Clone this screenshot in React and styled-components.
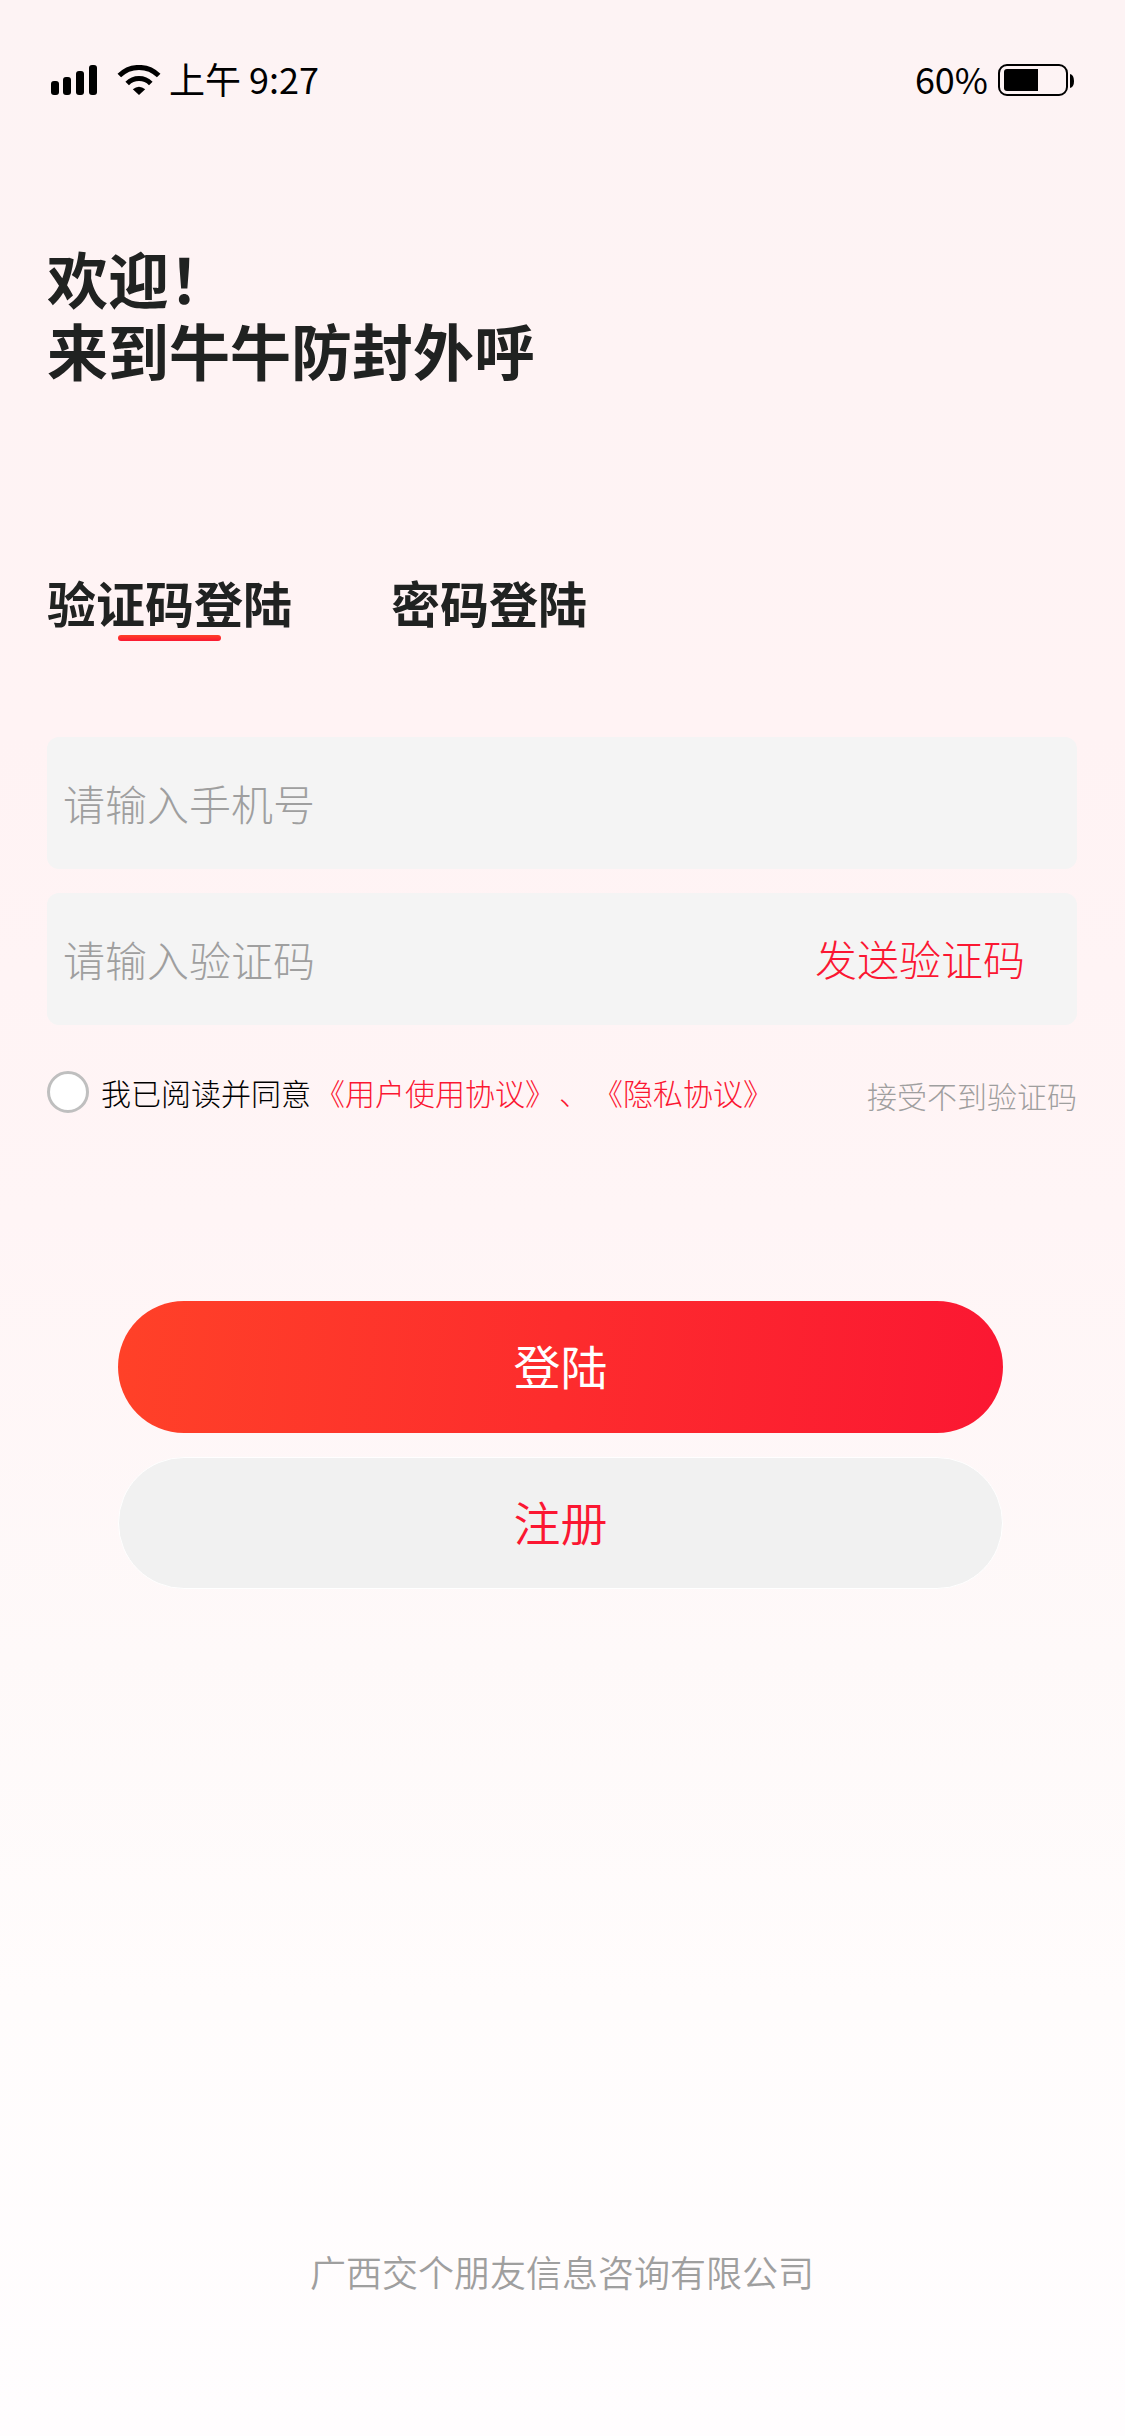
import styled, { createGlobalStyle } from "styled-components";
import { useState } from "react";

const GlobalStyle = createGlobalStyle`
  * {
    box-sizing: border-box;
  }

  body {
    margin: 0;
  }

  body,
  button,
  input {
    font-family: "Noto Sans CJK SC", sans-serif;
  }
`;

const Container = styled.div`
  min-height: 100vh;
  padding: 54px 48px 141px 47px;
  display: flex;
  flex-direction: column;
  background: linear-gradient(
    #fdf3f4 0%,
    #fff3f4 30%,
    #fff5f6 50%,
    #fef9f9 68%,
    #fffcfc 82%,
    #fffdfe 100%
  );
`;

const StatusBar = styled.div`
  display: flex;
  align-items: center;
  justify-content: space-between;
  padding: 0 3px 0 4px;
  font-size: 36px;
  line-height: 48px;
  color: #000;
`;

const StatusGroup = styled.div`
  display: flex;
  align-items: center;
  gap: ${(props) => props.$gap}px;
`;

const StatusText = styled.span`
  padding-bottom: 4px;
`;

const Title = styled.h1`
  margin: 136px 0 0;
  font-size: 61px;
  font-weight: 700;
  line-height: 72px;
  color: #202221;
`;

const Tabs = styled.div`
  display: flex;
  gap: 99px;
  margin-top: 192px;
`;

const Tab = styled.button`
  display: flex;
  flex-direction: column;
  align-items: center;
  gap: 9px;
  padding: 0;
  border: none;
  background: none;
  font-size: 49px;
  font-weight: 700;
  line-height: 48px;
  color: #202221;
  cursor: pointer;

  &::after {
    content: "";
    width: 103px;
    height: 6px;
    border-radius: 3px;
    background: ${(props) =>
      props.$active ? "linear-gradient(#ff4128, #fa1832)" : "none"};
  }
`;

const Form = styled.form`
  display: flex;
  flex-direction: column;
  gap: 24px;
  margin-top: 96px;
`;

const Field = styled.div`
  display: flex;
  align-items: center;
  height: 132px;
  padding: 0 52px 0 16px;
  border-radius: 12px;
  background-color: #f4f4f4;
`;

const Input = styled.input`
  flex: 1;
  min-width: 0;
  padding: 0;
  border: none;
  outline: none;
  background: none;
  font-size: 42px;
  font-weight: 200;
  line-height: 64px;
  color: #202221;

  &::placeholder {
    color: #9f9f9f;
    opacity: 1;
  }
`;

const SendCode = styled.button`
  padding: 0 0 3px;
  border: none;
  background: none;
  font-size: 42px;
  font-weight: 200;
  line-height: 64px;
  color: #fb1732;
  cursor: pointer;
`;

const AgreeRow = styled.div`
  display: flex;
  align-items: center;
  justify-content: space-between;
  margin-top: 22px;
  font-size: 30px;
  font-weight: 200;
  line-height: 42px;
`;

const Agreement = styled.div`
  display: flex;
  align-items: center;
  gap: 4px;
  color: #fb1732;
`;

const Checkbox = styled.input`
  appearance: none;
  width: 42px;
  height: 42px;
  margin: 0 8px 0 0;
  border: 3px solid #bfbfbf;
  border-radius: 50%;
  background-color: white;

  &:checked {
    border-color: #fb1732;
    background-color: #fb1732;
  }
`;

const Label = styled.label`
  color: #000;
`;

const Link = styled.a`
  color: #fb1732;
  text-decoration: none;
`;

const HelpLink = styled(Link)`
  align-self: flex-end;
  margin-bottom: -3px;
  color: #9f9f9f;
`;

const Actions = styled.div`
  display: flex;
  flex-direction: column;
  gap: 24px;
  margin: 164px 74px 0 71px;
`;

const Button = styled.button`
  height: 132px;
  padding: 0 0 5px;
  border: ${(props) => (props.$primary ? "none" : "1px solid white")};
  border-radius: 66px;
  background: ${(props) =>
    props.$primary ? "linear-gradient(95deg, #ff4128, #fb1732)" : "#f1f1f1"};
  font-size: 47px;
  font-weight: ${(props) => (props.$primary ? 400 : 350)};
  color: ${(props) => (props.$primary ? "white" : "#fb1732")};
  cursor: pointer;
`;

const Footer = styled.footer`
  margin-top: auto;
  text-align: center;
  font-size: 36px;
  font-weight: 350;
  line-height: 48px;
  color: #9f9f9f;
`;

const SignalIcon = () => (
  <svg width="46" height="30" viewBox="0 0 46 30">
    <rect x="0" y="16" width="8" height="14" rx="3" />
    <rect x="12" y="12" width="8" height="18" rx="3" />
    <rect x="25" y="6" width="8" height="24" rx="3" />
    <rect x="38" y="0" width="8" height="30" rx="3" />
  </svg>
);

const WifiIcon = () => (
  <svg width="44" height="30" viewBox="0 0 44 30">
    <g fill="none" stroke="#000" strokeWidth="5">
      <path d="M2.3 10.6A27.8 27.8 0 0 1 41.7 10.6" />
      <path d="M10.2 18.4A16.6 16.6 0 0 1 33.8 18.4" />
    </g>
    <path d="M15.8 24.2Q22 19.2 28.2 24.2L22 30Z" />
  </svg>
);

const BatteryIcon = () => (
  <svg width="76" height="32" viewBox="0 0 76 32">
    <rect
      x="1"
      y="1"
      width="68"
      height="30"
      rx="8"
      fill="none"
      stroke="#000"
      strokeWidth="2"
    />
    <path d="M9 5H40V27H9Q6 27 6 24V8Q6 5 9 5Z" />
    <path d="M72 10Q76 11 76 17Q76 23 72 24Z" />
  </svg>
);

const App = () => {
  const [tab, setTab] = useState("code");
  const [phone, setPhone] = useState("");
  const [secret, setSecret] = useState("");
  const [agreed, setAgreed] = useState(false);

  const secretHint = tab === "code" ? "请输入验证码" : "请输入密码";

  return (
    <Container>
      <GlobalStyle />
      <StatusBar>
        <StatusGroup $gap={20}>
          <SignalIcon />
          <StatusGroup $gap={8}>
            <WifiIcon />
            <StatusText>上午 9:27</StatusText>
          </StatusGroup>
        </StatusGroup>
        <StatusGroup $gap={10}>
          <StatusText>60%</StatusText>
          <BatteryIcon />
        </StatusGroup>
      </StatusBar>

      <Title>
        欢迎！
        <br />
        来到牛牛防封外呼
      </Title>

      <Tabs>
        <Tab $active={tab === "code"} onClick={() => setTab("code")}>
          验证码登陆
        </Tab>
        <Tab $active={tab === "password"} onClick={() => setTab("password")}>
          密码登陆
        </Tab>
      </Tabs>

      <Form id="login" onSubmit={(e) => e.preventDefault()}>
        <Field>
          <Input
            type="tel"
            aria-label="手机号"
            placeholder="请输入手机号"
            value={phone}
            onChange={(e) => setPhone(e.target.value)}
          />
        </Field>
        <Field>
          <Input
            type={tab === "code" ? "text" : "password"}
            aria-label={secretHint}
            placeholder={secretHint}
            value={secret}
            onChange={(e) => setSecret(e.target.value)}
          />
          {tab === "code" && <SendCode type="button">发送验证码</SendCode>}
        </Field>

        <AgreeRow>
          <Agreement>
            <Checkbox
              id="agree"
              type="checkbox"
              checked={agreed}
              onChange={(e) => setAgreed(e.target.checked)}
            />
            <Label htmlFor="agree">我已阅读并同意</Label>
            <Link href="#terms">《用户使用协议》</Link>
            <span>、</span>
            <Link href="#privacy">《隐私协议》</Link>
          </Agreement>
          <HelpLink href="#help">接受不到验证码</HelpLink>
        </AgreeRow>

        <Actions>
          <Button type="submit" $primary>
            登陆
          </Button>
          <Button type="button">注册</Button>
        </Actions>
      </Form>

      <Footer>广西交个朋友信息咨询有限公司</Footer>
    </Container>
  );
};

export default App;
